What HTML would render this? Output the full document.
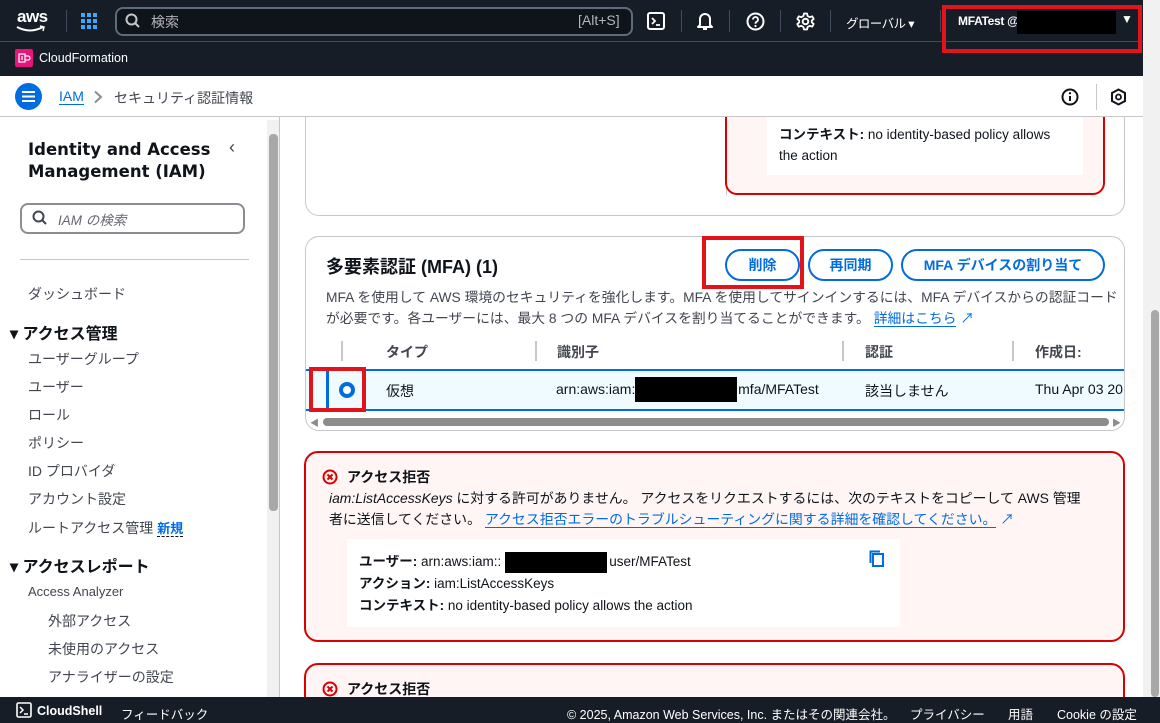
<!DOCTYPE html>
<html style="overflow:hidden"><head><meta charset="utf-8"><style>
*{box-sizing:border-box;margin:0;padding:0}
html,body{width:1160px;height:723px;overflow:hidden}
body{position:relative;background:#fff;font-family:"Liberation Sans","Noto Sans CJK JP",sans-serif;color:#0f141a;font-size:14px}
.abs{position:absolute}
.top{left:0;top:0;width:1143px;height:42px;background:#161d26;border-bottom:1px solid #414d5c}
.sub{left:0;top:42px;width:1143px;height:34px;background:#161d26}
.w{color:#fff}
.sep{width:1px;height:22px;background:#414d5c;top:10px}
.crumb{left:0;top:76px;width:1143px;height:41px;background:#fff;border-bottom:1px solid #c6c6cd}
.side{left:0;top:117px;width:280px;height:580px;background:#fff;border-right:1px solid #c6c6cd}
.nav{left:28px;color:#424650;font-size:14px}
.foot{left:0;top:697px;width:1160px;height:26px;background:#161d26;color:#fff;font-size:12.5px}
.card{background:#fff;border:1px solid #c6c6cd;border-radius:14px}
.err{background:#fff5f5;border:2px solid #db0000;border-radius:14px}
.btn{height:32px;border:2px solid #006ce0;border-radius:16px;color:#006ce0;font-weight:bold;font-size:14px;text-align:center;line-height:28px}
.red{border:4px solid #e3131b}
.link{color:#006ce0}
</style></head><body>
<div class="abs top"></div>
<div class="abs sub"></div>
<div class="abs w" style="left:17px;top:7px;font-weight:bold;font-size:17px;letter-spacing:-0.5px">aws</div>
<svg class="abs" style="left:16px;top:25px" width="30" height="8"><path d="M1 2 Q14 9 27 2" stroke="#fff" stroke-width="2" fill="none"/><path d="M24 1 L28 2 L27 6" stroke="#fff" stroke-width="1.5" fill="none"/></svg>
<div class="abs sep" style="left:66px"></div>
<svg class="abs" style="left:81px;top:13px" width="17" height="17" fill="#3ea8ff"><rect x="0" y="0" width="4" height="4"/><rect x="6" y="0" width="4" height="4"/><rect x="12" y="0" width="4" height="4"/><rect x="0" y="6" width="4" height="4"/><rect x="6" y="6" width="4" height="4"/><rect x="12" y="6" width="4" height="4"/><rect x="0" y="12" width="4" height="4"/><rect x="6" y="12" width="4" height="4"/><rect x="12" y="12" width="4" height="4"/></svg>
<div class="abs" style="left:115px;top:7px;width:518px;height:29px;border:2px solid #5f6b7a;border-radius:8px;background:#0f141a"></div>
<svg class="abs" style="left:125px;top:13px" width="16" height="16"><circle cx="6.5" cy="6.5" r="5" stroke="#c6c6cd" stroke-width="2" fill="none"/><path d="M10 10 L14 14" stroke="#c6c6cd" stroke-width="2"/></svg>
<div class="abs" style="left:151px;top:12px;color:#b4b4bb;font-size:14px">検索</div>
<div class="abs" style="left:578px;top:12px;color:#b4b4bb;font-size:14px">[Alt+S]</div>
<svg class="abs" style="left:647px;top:12px" width="19" height="19"><rect x="1" y="1" width="16" height="16" rx="2" stroke="#fff" stroke-width="2" fill="none"/><path d="M5 6 L8 9 L5 12 M9 13 H13" stroke="#fff" stroke-width="1.8" fill="none"/></svg>
<div class="abs sep" style="left:681px"></div>
<svg class="abs" style="left:696px;top:11px" width="18" height="20"><path d="M4 14 V8 a5 5 0 0 1 10 0 V14 L16 16 H2 Z" stroke="#fff" stroke-width="2" fill="none" stroke-linejoin="round"/><path d="M7 18 H11" stroke="#fff" stroke-width="2"/></svg>
<div class="abs sep" style="left:729px"></div>
<svg class="abs" style="left:746px;top:12px" width="19" height="19"><circle cx="9.5" cy="9.5" r="8" stroke="#fff" stroke-width="2" fill="none"/><path d="M7 7.5 a2.5 2.5 0 1 1 3.5 2.3 c-1 .5 -1 1 -1 2" stroke="#fff" stroke-width="1.8" fill="none"/><circle cx="9.5" cy="14" r="1.1" fill="#fff"/></svg>
<div class="abs sep" style="left:780px"></div>
<svg class="abs" style="left:796px;top:12px" width="19" height="19"><circle cx="9.5" cy="9.5" r="2.8" stroke="#fff" stroke-width="2" fill="none"/><path d="M8 1.5 H11 L11.6 4 L13.8 5.2 L16.2 4.3 L17.7 6.9 L15.8 8.6 V10.4 L17.7 12.1 L16.2 14.7 L13.8 13.8 L11.6 15 L11 17.5 H8 L7.4 15 L5.2 13.8 L2.8 14.7 L1.3 12.1 L3.2 10.4 V8.6 L1.3 6.9 L2.8 4.3 L5.2 5.2 L7.4 4 Z" stroke="#fff" stroke-width="1.8" fill="none" stroke-linejoin="round"/></svg>
<div class="abs sep" style="left:830px"></div>
<div class="abs w" style="left:846px;top:13px;font-size:12.5px;letter-spacing:-0.6px">グローバル ▾</div>
<div class="abs sep" style="left:940px"></div>
<div class="abs w" style="left:958px;top:14px;font-size:12px;font-weight:bold;letter-spacing:-0.3px">MFATest @</div>
<div class="abs" style="left:1017px;top:11px;width:99px;height:23px;background:#000"></div>
<div class="abs w" style="left:1121px;top:12px;font-size:12px">▼</div>
<div class="abs red" style="left:942px;top:5px;width:200px;height:48px"></div>
<div class="abs" style="left:1143px;top:0;width:17px;height:697px;background:#f1f1f1"></div>
<div class="abs" style="left:1151px;top:310px;width:8px;height:387px;background:#a8a8a8;border-radius:4px"></div>
<div class="abs" style="left:15px;top:49px;width:18px;height:18px;background:#e7157b;border-radius:2px"></div>
<svg class="abs" style="left:17px;top:51px" width="14" height="14"><path d="M2 3 H8 V11 H2 Z M4 6 H6 M4 8 H6 M8 5 H11 a2 2 0 0 1 0 4 H8" stroke="#fff" stroke-width="1.2" fill="none"/></svg>
<div class="abs w" style="left:39px;top:51px;font-size:12.5px">CloudFormation</div>
<div class="abs crumb"></div>
<div class="abs" style="left:15px;top:83px;width:27px;height:27px;border-radius:50%;background:#006ce0"></div>
<svg class="abs" style="left:21px;top:89px" width="15" height="15"><path d="M1 3 H14 M1 7.5 H14 M1 12 H14" stroke="#fff" stroke-width="2"/></svg>
<div class="abs link" style="left:59px;top:88px;font-size:14px;border-bottom:1px solid #006ce0">IAM</div>
<svg class="abs" style="left:93px;top:90px" width="10" height="14"><path d="M2 1.5 L8 7 L2 12.5" stroke="#8c8c94" stroke-width="2" fill="none"/></svg>
<div class="abs" style="left:114px;top:88px;color:#424650;font-size:14px">セキュリティ認証情報</div>
<svg class="abs" style="left:1061px;top:88px" width="18" height="18"><circle cx="9" cy="9" r="7.5" stroke="#0f141a" stroke-width="2" fill="none"/><path d="M9 8 V13" stroke="#0f141a" stroke-width="2"/><circle cx="9" cy="5.2" r="1.1"/></svg>
<div class="abs" style="left:1096px;top:84px;width:1px;height:26px;background:#c6c6cd"></div>
<svg class="abs" style="left:1110px;top:88px" width="17" height="18"><path d="M8.5 1.5 L15 5 V13 L8.5 16.5 L2 13 V5 Z" stroke="#0f141a" stroke-width="2" fill="none"/><circle cx="8.5" cy="9" r="2.5" stroke="#0f141a" stroke-width="1.8" fill="none"/></svg>
<div class="abs side"></div>
<div class="abs" style="left:267px;top:120px;width:12px;height:577px;background:#f1f1f1"></div>
<div class="abs" style="left:269px;top:134px;width:9px;height:377px;background:#a8a8a8;border-radius:4px"></div>
<div class="abs" style="left:28px;top:139px;font-size:16.5px;font-weight:bold;line-height:22px;font-family:'DejaVu Sans','Noto Sans CJK JP',sans-serif">Identity and Access<br>Management (IAM)</div>
<div class="abs" style="left:229px;top:137px;font-size:18px;color:#424650">‹</div>
<div class="abs" style="left:20px;top:203px;width:225px;height:31px;border:2px solid #8c8c94;border-radius:8px"></div>
<svg class="abs" style="left:32px;top:210px" width="16" height="16"><circle cx="6.5" cy="6.5" r="5" stroke="#424650" stroke-width="2" fill="none"/><path d="M10 10 L14 14" stroke="#424650" stroke-width="2"/></svg>
<div class="abs" style="left:58px;top:209px;color:#656871;font-size:13.5px;font-style:italic">IAM の検索</div>
<div class="abs" style="left:20px;top:259px;width:229px;height:1px;background:#c6c6cd"></div>
<div class="abs nav" style="top:284px">ダッシュボード</div>
<div class="abs" style="left:10px;top:320px;font-size:16px;font-weight:bold">▾ アクセス管理</div>
<div class="abs nav" style="top:349px">ユーザーグループ</div>
<div class="abs nav" style="top:377px">ユーザー</div>
<div class="abs nav" style="top:405px">ロール</div>
<div class="abs nav" style="top:433px">ポリシー</div>
<div class="abs nav" style="top:461px">ID プロバイダ</div>
<div class="abs nav" style="top:489px">アカウント設定</div>
<div class="abs nav" style="top:518px">ルートアクセス管理 <span style="color:#006ce0;font-weight:bold;font-size:13px;border-bottom:1px dashed #0f141a">新規</span></div>
<div class="abs" style="left:10px;top:553px;font-size:16px;font-weight:bold">▾ アクセスレポート</div>
<div class="abs nav" style="top:584px;font-size:13px">Access Analyzer</div>
<div class="abs nav" style="left:48px;top:611px">外部アクセス</div>
<div class="abs nav" style="left:48px;top:639px">未使用のアクセス</div>
<div class="abs nav" style="left:48px;top:667px">アナライザーの設定</div>
<div class="abs card" style="left:305px;top:117px;width:820px;height:99px;border-top:none;border-radius:0 0 14px 14px"></div>
<div class="abs" style="left:726px;top:117px;width:1px;height:78px;background:#c6c6cd"></div>
<div class="abs err" style="left:725px;top:117px;width:380px;height:78px;border-top:none;border-radius:0 0 12px 12px"></div>
<div class="abs" style="left:767px;top:117px;width:316px;height:58px;background:#fff"></div>
<div class="abs" style="left:779px;top:124px;font-size:13.5px;line-height:21px"><b>コンテキスト:</b> no identity-based policy allows<br>the action</div>
<div class="abs card" style="left:305px;top:236px;width:820px;height:195px"></div>
<div class="abs" style="left:326px;top:253px;font-size:18px;font-weight:bold">多要素認証 (MFA) (1)</div>
<div class="abs btn" style="left:725px;top:249px;width:75px">削除</div>
<div class="abs red" style="left:702px;top:236px;width:102px;height:53px"></div>
<div class="abs btn" style="left:808px;top:249px;width:85px">再同期</div>
<div class="abs btn" style="left:901px;top:249px;width:204px">MFA デバイスの割り当て</div>
<div class="abs" style="left:326px;top:287px;font-size:13.8px;line-height:21px;color:#424650;width:798px">MFA を使用して AWS 環境のセキュリティを強化します。MFA を使用してサインインするには、MFA デバイスからの認証コードが必要です。各ユーザーには、最大 8 つの MFA デバイスを割り当てることができます。 <span class="link" style="border-bottom:1px solid #006ce0">詳細はこちら</span> <span class="link">↗</span></div>
<div class="abs" style="left:341px;top:341px;width:2px;height:20px;background:#c6c6cd"></div>
<div class="abs" style="left:386px;top:342px;font-size:14px;font-weight:bold;color:#424650">タイプ</div>
<div class="abs" style="left:535px;top:341px;width:2px;height:20px;background:#c6c6cd"></div>
<div class="abs" style="left:557px;top:342px;font-size:14px;font-weight:bold;color:#424650">識別子</div>
<div class="abs" style="left:842px;top:341px;width:2px;height:20px;background:#c6c6cd"></div>
<div class="abs" style="left:865px;top:342px;font-size:14px;font-weight:bold;color:#424650">認証</div>
<div class="abs" style="left:1012px;top:341px;width:2px;height:20px;background:#c6c6cd"></div>
<div class="abs" style="left:1035px;top:342px;font-size:14px;font-weight:bold;color:#424650">作成日:</div>
<div class="abs" style="left:306px;top:369px;width:818px;height:42px;background:#f0fbff;border-top:2px solid #006ce0;border-bottom:2px solid #006ce0"></div>
<div class="abs" style="left:326px;top:369px;width:3px;height:42px;background:#006ce0;border-radius:2px"></div>
<div class="abs" style="left:339px;top:382px;width:16px;height:16px;border-radius:50%;border:4.5px solid #006ce0;background:#fff"></div>
<div class="abs red" style="left:309px;top:367px;width:57px;height:45px"></div>
<div class="abs" style="left:386px;top:381px;font-size:14px">仮想</div>
<div class="abs" style="left:556px;top:381px;font-size:14px">arn:aws:iam::<span style="display:inline-block;width:95px">&nbsp;</span>:mfa/MFATest</div>
<div class="abs" style="left:635px;top:377px;width:102px;height:25px;background:#000"></div>
<div class="abs" style="left:865px;top:381px;font-size:14px">該当しません</div>
<div class="abs" style="left:1035px;top:381px;font-size:14px;white-space:nowrap;width:88px;overflow:hidden">Thu Apr 03 2025</div>
<div class="abs" style="left:323px;top:418px;width:786px;height:8px;background:#8c8c8c;border-radius:4px"></div>
<div class="abs" style="left:310px;top:416px;font-size:9px;color:#8c8c8c">◀</div>
<div class="abs" style="left:1112px;top:416px;font-size:9px;color:#8c8c8c">▶</div>
<div class="abs err" style="left:304px;top:451px;width:821px;height:191px"></div>
<svg class="abs" style="left:322px;top:469px" width="16" height="16"><circle cx="8" cy="8" r="6.5" stroke="#db0000" stroke-width="2" fill="none"/><path d="M5.5 5.5 L10.5 10.5 M10.5 5.5 L5.5 10.5" stroke="#db0000" stroke-width="2"/></svg>
<div class="abs" style="left:347px;top:467px;font-size:14px;font-weight:bold">アクセス拒否</div>
<div class="abs" style="left:329px;top:488px;font-size:13.9px;line-height:21px;width:765px"><i>iam:ListAccessKeys</i> に対する許可がありません。 アクセスをリクエストするには、次のテキストをコピーして AWS 管理者に送信してください。 <span class="link" style="border-bottom:1px solid #006ce0">アクセス拒否エラーのトラブルシューティングに関する詳細を確認してください。</span> <span class="link">↗</span></div>
<div class="abs" style="left:347px;top:539px;width:553px;height:88px;background:#fff"></div>
<div class="abs" style="left:359px;top:551px;font-size:13.5px;line-height:22px"><b>ユーザー:</b> arn:aws:iam::<span style="display:inline-block;width:108px"></span>user/MFATest<br><b>アクション:</b> iam:ListAccessKeys<br><b>コンテキスト:</b> no identity-based policy allows the action</div>
<div class="abs" style="left:505px;top:552px;width:102px;height:21px;background:#000"></div>
<svg class="abs" style="left:869px;top:550px" width="16" height="17"><path d="M4 4 H14 V16 H4 Z" stroke="#006ce0" stroke-width="2" fill="none"/><path d="M1.5 13 V1.5 H11" stroke="#006ce0" stroke-width="2" fill="none"/></svg>
<div class="abs err" style="left:304px;top:663px;width:821px;height:50px"></div>
<svg class="abs" style="left:322px;top:681px" width="16" height="16"><circle cx="8" cy="8" r="6.5" stroke="#db0000" stroke-width="2" fill="none"/><path d="M5.5 5.5 L10.5 10.5 M10.5 5.5 L5.5 10.5" stroke="#db0000" stroke-width="2"/></svg>
<div class="abs" style="left:347px;top:679px;font-size:14px;font-weight:bold">アクセス拒否</div>
<div class="abs foot"></div>
<svg class="abs" style="left:16px;top:702px" width="16" height="16"><rect x="1" y="1" width="14" height="14" rx="1.5" stroke="#fff" stroke-width="1.6" fill="none"/><path d="M4 5 L7 8 L4 11 M8 12 H12" stroke="#fff" stroke-width="1.5" fill="none"/></svg>
<div class="abs w" style="left:37px;top:704px;font-size:12.5px;font-weight:bold">CloudShell</div>
<div class="abs w" style="left:121px;top:704px;font-size:12.5px">フィードバック</div>
<div class="abs w" style="left:567px;top:704px;font-size:12.5px">© 2025, Amazon Web Services, Inc. またはその関連会社。</div>
<div class="abs w" style="left:910px;top:704px;font-size:12.5px">プライバシー</div>
<div class="abs w" style="left:1008px;top:704px;font-size:12.5px">用語</div>
<div class="abs w" style="left:1057px;top:704px;font-size:12.5px">Cookie の設定</div>
</body></html>
